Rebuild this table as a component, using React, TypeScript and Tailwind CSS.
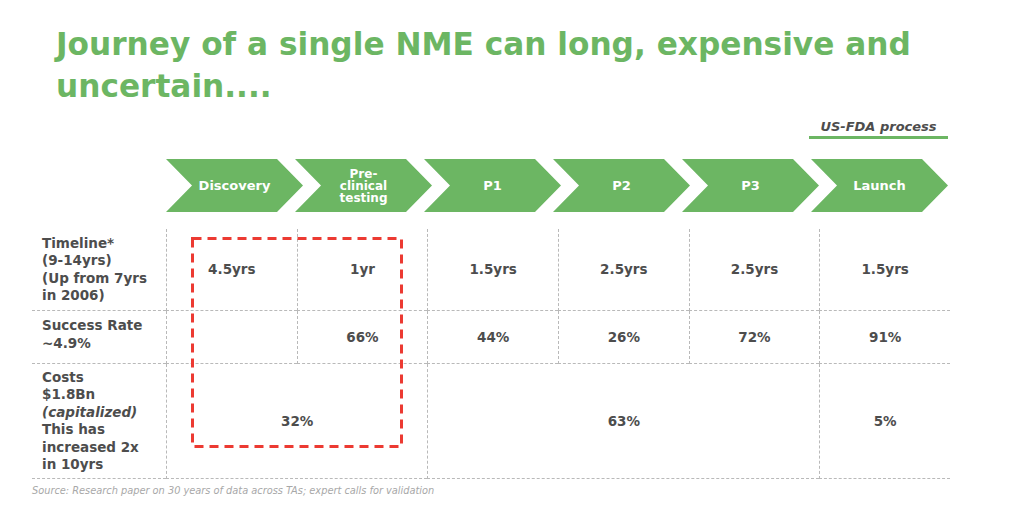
import React from "react";

/* ── Stage chevrons across the top ── */
const STAGES: string[][] = [
  ["Discovery"],
  ["Pre-", "clinical", "testing"],
  ["P1"],
  ["P2"],
  ["P3"],
  ["Launch"],
];

const SANS = "font-['DejaVu_Sans',sans-serif]";
const line = "border-dashed border-[#b9b9b9]";

function Label({ children }: { children: React.ReactNode }) {
  return (
    <div className={`flex flex-col justify-center border-b ${line} pl-[10px] text-[13.5px] font-bold leading-[17.5px] text-[#4d4d4d]`}>
      {children}
    </div>
  );
}

function Cell({ children, span = "" }: { children?: React.ReactNode; span?: string }) {
  return (
    <div className={`flex items-center justify-center border-b border-l ${line} ${span} text-[13.5px] font-bold text-[#4d4d4d]`}>
      {children}
    </div>
  );
}

export default function App() {
  return (
    <div className={`h-[507px] w-[1024px] overflow-hidden bg-white ${SANS}`}>
      {/* ── Title ── */}
      <h1 className="ml-[56px] mt-[23px] w-[900px] text-[31.2px] font-bold leading-[42px] text-[#6cb663]">
        Journey of a single NME can long, expensive and uncertain....
      </h1>

      {/* ── US-FDA tag ── */}
      <div className="ml-[809px] mt-[12px] w-[139px] border-b-[3px] border-[#6cb663] pb-[1px] text-center text-[13px] font-bold italic leading-[16px] text-[#4d4d4d]">
        US-FDA process
      </div>

      {/* ── Chevrons ── */}
      <div className="ml-[166px] mt-[20px] flex">
        {STAGES.map((s, i) => (
          <div
            key={i}
            className={`flex h-[53px] w-[137px] shrink-0 flex-col items-center justify-center bg-[#6cb663] font-bold text-white [clip-path:polygon(0_0,111px_0,137px_50%,111px_100%,0_100%,26px_50%)] ${
              s.length > 1 ? "text-[12px] leading-[12px]" : "text-[13px] leading-[16px]"
            } ${i > 0 ? "-ml-[8px]" : ""}`}
          >
            {s.map((t) => (
              <span key={t}>{t}</span>
            ))}
          </div>
        ))}
      </div>

      {/* ── Data table ── */}
      <div className="relative ml-[32px] mt-[17px] w-[918px]">
        <div className="grid grid-cols-[134px_repeat(6,1fr)] grid-rows-[82px_53px_115px]">
          <Label>
            <span>Timeline*</span>
            <span>(9-14yrs)</span>
            <span>(Up from 7yrs</span>
            <span>in 2006)</span>
          </Label>
          <Cell>4.5yrs</Cell>
          <Cell>1yr</Cell>
          <Cell>1.5yrs</Cell>
          <Cell>2.5yrs</Cell>
          <Cell>2.5yrs</Cell>
          <Cell>1.5yrs</Cell>

          <Label>
            <span className="-mt-[5px]">Success Rate</span>
            <span>~4.9%</span>
          </Label>
          <Cell />
          <Cell>66%</Cell>
          <Cell>44%</Cell>
          <Cell>26%</Cell>
          <Cell>72%</Cell>
          <Cell>91%</Cell>

          <Label>
            <span>Costs</span>
            <span>$1.8Bn</span>
            <span className="italic">(capitalized)</span>
            <span>This has</span>
            <span>increased 2x</span>
            <span>in 10yrs</span>
          </Label>
          <Cell span="col-span-2">32%</Cell>
          <Cell span="col-span-3">63%</Cell>
          <Cell>5%</Cell>
        </div>

        {/* red dashed highlight over Discovery + Pre-clinical */}
        <svg className="absolute left-[159px] top-[8px]" width="212" height="211" viewBox="0 0 212 211">
          <rect x="1.5" y="1.5" width="209" height="208" fill="none" stroke="#ec3a32" strokeWidth="3" strokeDasharray="9 6" />
        </svg>
      </div>

      {/* ── Source ── */}
      <p className="ml-[32px] mt-[5px] text-[9.8px] italic leading-[14px] text-[#a8a8a8]">
        Source: Research paper on 30 years of data across TAs; expert calls for validation
      </p>
    </div>
  );
}
